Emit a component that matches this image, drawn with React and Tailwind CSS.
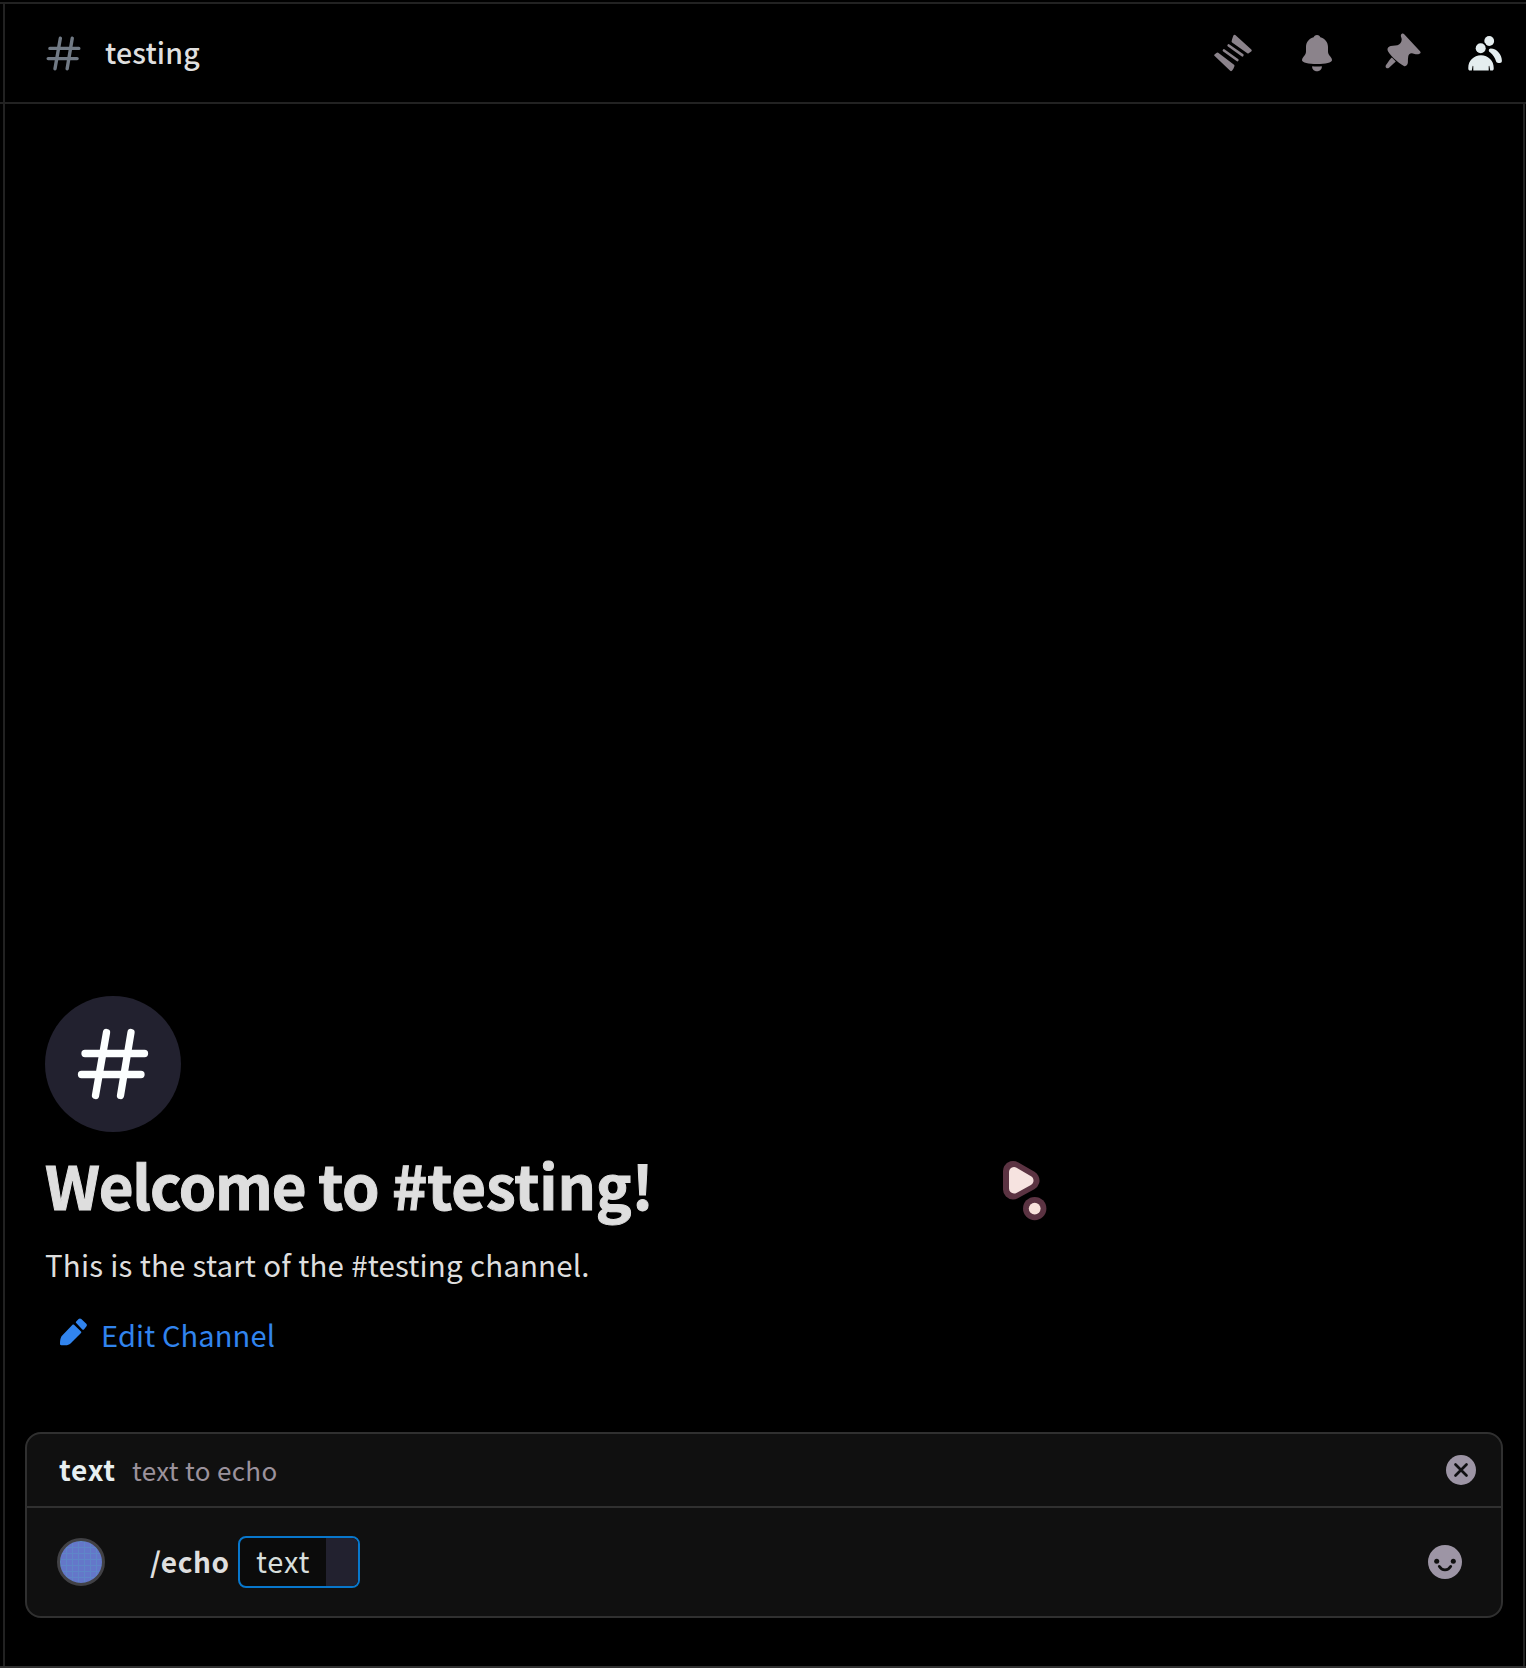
import React from "react";

function Hash({ className, strokeWidth }) {
  return (
    <svg viewBox="0 0 72 72" className={className} fill="none" stroke="currentColor" strokeWidth={strokeWidth} strokeLinecap="round">
      <path d="M29.5 4.5 18.5 67.5M54 4.5 43.5 67.5M8 25.5H67.500M4.500 46.500H64" />
    </svg>
  );
}

function ThreadsIcon() {
  return (
    <svg viewBox="0 0 38 38" className="h-[38px] w-[38px]" fill="currentColor" stroke="currentColor" strokeLinecap="round" strokeLinejoin="round">
      <path d="M20.500 2 19.300 5.300 18.800 7.500 34 18.300 36.500 16.500Z" strokeWidth="2.400" />
      <path d="M14.700 11.500 28.300 21.200M10 16.500 23.300 26" fill="none" strokeWidth="2.700" />
      <path d="M3.500 19.700 1.500 21.200 17 36 18.400 34 19.300 31.700Z" strokeWidth="2.400" />
    </svg>
  );
}

function BellIcon() {
  return (
    <svg viewBox="0 0 30 37" className="h-[37px] w-[30px]" fill="currentColor">
      <path d="M15 0c-1.900 0-3 1.200-3.300 2.300C7.300 3.500 4 7 4 12v4.500c0 2.200-1 3.500-2.500 5.200C.5 22.900 0 24 0 25.300 0 27.700 6.500 29 15 29s15-1.300 15-3.700c0-1.300-.5-2.400-1.500-3.600C27 20 26 18.700 26 16.500V12c0-5-3.300-8.500-7.700-9.700C18 1.200 16.900 0 15 0Z" />
      <path d="M10.200 31.200c3 .3 6.600.3 9.600 0 .4 2.700-1.800 5-4.800 5s-5.200-2.300-4.800-5Z" />
    </svg>
  );
}

function PinIcon() {
  return (
    <svg viewBox="0 0 36 37" className="h-[37px] w-[36px]" fill="currentColor">
      <path d="M17.200.6c-1 .4-1.500 1.400-1.300 2.700.2 1.200.9 2 .8 3.500-.2 2.600-2 5-4.300 5.400l-6.700.8c-1.600.2-3.600 1.900-3.200 4 .6 3.300 10.500 13.200 16.400 15.900 2 .9 3.900-1 4-3.600 0-1.700 0-3.700.3-5.500.3-2.200 1.400-3.300 3.500-3.500 1.500-.1 2.500.9 4 1 1.300.1 2.900.1 4.300-.8 1-.7.700-1.700-.2-2.600L19.200 1.200c-.7-.7-1.200-.9-2-.6Z" />
      <path d="M7.600 25.200 10.800 28.400 4 34.700c-1.900 1.600-4.400-.2-3-2.600 1-1.500 3.500-5.200 5-6.900.5-.6 1.100-.5 1.600 0Z" />
    </svg>
  );
}

function MembersIcon() {
  return (
    <svg viewBox="0 0 34 35" className="h-[35px] w-[34px]" fill="currentColor">
      <circle cx="21.200" cy="5" r="4.900" />
      <circle cx="12.700" cy="12.200" r="6.700" fill="#000" />
      <circle cx="12.700" cy="12.200" r="5" />
      <path d="M22.700 12.500c6.300 0 11.200 6.300 11.200 12.300 0 1.400-.8 2.200-2 2.200h-1.500c-1.200 0-2-.7-2.400-1.700-.9-3.200-2.900-6.600-6-9-.7-.6-1.200-1-1.200-1.900 0-1.200.9-1.900 1.900-1.900Z" />
      <path d="M.3 31.700C.3 24.900 5.700 19.300 13 19.300s12.700 5.600 12.700 12.400v1c0 1.200-.7 1.800-1.700 1.800H22.200l-.7-4.100c-.2-.8-.8-.7-.8 0v4.100H5.300v-4.100c0-.7-.6-.8-.8 0l-.7 4.100H2c-1 0-1.700-.6-1.700-1.800Z" />
    </svg>
  );
}

function PencilIcon() {
  return (
    <svg viewBox="0 0 27 28" className="h-7 w-[27px]" fill="currentColor">
      <path d="M16.200 3.600 18.600 1c.8-.8 1.900-.8 2.700 0l5 4.700c.8.800.8 1.900 0 2.700l-2.200 2.900c-.6.700-1.300.7-2 0l-5.900-6.200c-.5-.5-.5-1 0-1.500Z" />
      <path d="M14 6.800 21 13.400c.5.500.5 1.100 0 1.600L10.500 25.500C9.300 26.700 7.500 27.300 5.500 27.300H1.300C.5 27.300 0 26.900 0 26.100c0-3.400.3-5.700 1.500-7.800L12.500 6.800c.5-.5 1-.5 1.500 0Z" />
    </svg>
  );
}

function CloseIcon() {
  return (
    <svg viewBox="0 0 30 30" className="h-[30px] w-[30px]">
      <circle cx="15" cy="15" r="15" fill="#9d95a5" />
      <path d="m9.500 9.500 11 11m0-11-11 11" stroke="#101012" strokeWidth="2.700" strokeLinecap="round" />
    </svg>
  );
}

function SmileIcon() {
  return (
    <svg viewBox="0 0 34 34" className="h-[34px] w-[34px]">
      <circle cx="17" cy="17" r="17" fill="#9d95a5" />
      <circle cx="8.700" cy="16.300" r="2.500" fill="#101010" />
      <circle cx="25.300" cy="16.300" r="2.500" fill="#101010" />
      <path d="M11.200 21.300C14 26 20 26 22.800 21.300" fill="none" stroke="#101010" strokeWidth="2.700" strokeLinecap="round" />
    </svg>
  );
}

function Pointer() {
  return (
    <svg viewBox="0 0 46 62" className="absolute left-[1002px] top-[1160px] h-[62px] w-[46px]" strokeLinejoin="round">
      <path d="M11 11v18.500L27.500 20.500Z" fill="#5b3342" stroke="#5b3342" strokeWidth="20" />
      <circle cx="32.700" cy="48.600" r="11.700" fill="#5b3342" />
      <path d="M12 12v16.500L26.500 20.500Z" fill="#f6e3e0" stroke="#f6e3e0" strokeWidth="10" />
      <circle cx="32.700" cy="48.600" r="5.900" fill="#f9e3dc" />
    </svg>
  );
}

function Header() {
  return (
    <header className="ml-[3px] flex h-[98px] items-center border-l-2 border-[#222222] pl-[41px] pr-[24px]">
      <Hash className="h-[35px] w-[35px] text-[#717a85]" strokeWidth={7} />
      <h1 className="-mt-0.5 ml-6 text-[28.500px] font-medium leading-10 tracking-[0.15px] text-[#dfdfdf]">testing</h1>
      <nav className="ml-auto flex items-center text-[#8b838b]">
        <ThreadsIcon />
        <span className="ml-[50px]"><BellIcon /></span>
        <span className="-mt-1 ml-[53px]"><PinIcon /></span>
        <span className="ml-[47px] text-[#e4edef]"><MembersIcon /></span>
      </nav>
    </header>
  );
}

function Composer() {
  return (
    <section className="ml-[20px] mr-[20px] h-[186px] rounded-2xl border-2 border-[#303030] bg-[#101010]">
      <div className="flex h-[74px] items-center border-b-2 border-[#303030] pl-8 pr-[25px]">
        <b className="-mt-0.5 text-[28px] leading-10 tracking-[0.8px] text-[#e7eff1]">text</b>
        <span className="ml-4 text-[26px] leading-10 tracking-[0.32px] text-[#9b929c]">text to echo</span>
        <span className="ml-auto"><CloseIcon /></span>
      </div>
      <div className="flex h-[108px] items-center pl-[30px] pr-[39px]">
        <div className="h-12 w-12 rounded-full border-3 border-[#414145] bg-[#6477c9] bg-[linear-gradient(90deg,#5f86c8_1px,transparent_1px),linear-gradient(#5f86c8_1px,transparent_1px)] bg-size-[6px_6px]" />
        <b className="-mt-0.5 ml-[45px] w-[80px] text-[28px] leading-10 tracking-[0.6px] text-[#dfdfdf]">/echo</b>
        <div className="ml-2 flex h-[52px] w-[122px] overflow-hidden rounded-lg border-2 border-[#0877cc] bg-[#0b0b0b]">
          <span className="w-[86px] pl-4 text-[29px] leading-[45px] tracking-[0.8px] text-[#d8dfdc]">text</span>
          <span className="flex-1 bg-[#22212f]" />
        </div>
        <span className="ml-auto"><SmileIcon /></span>
      </div>
    </section>
  );
}

export default function App() {
  return (
    <div className="relative flex h-[1668px] w-[1526px] flex-col overflow-hidden whitespace-nowrap border-b-2 border-[#303030] bg-black pt-0.5 font-['Noto_Sans_CJK_JP','Noto_Sans',sans-serif]">
      <div className="h-0.5 shrink-0 bg-[#222222]" />
      <Header />
      <div className="h-0.5 shrink-0 bg-[#222222]" />
      <main className="ml-[3px] mr-px flex flex-1 flex-col justify-end border-x-2 border-[#222222] pb-[48px]">
        <div className="flex flex-col items-start pb-[76px] pl-10">
          <div className="flex h-[136px] w-[136px] items-center justify-center rounded-full bg-[#22212f]">
            <Hash className="h-[72px] w-[72px] text-[#fcffff]" strokeWidth={7.3} />
          </div>
          <h2 className="mt-4 text-[60px] font-bold leading-[72px] tracking-[-0.6px] text-[#dedede] [-webkit-text-stroke:1px_#dedede]">
            <span className="tracking-[-1.2px]">Welcome</span> to <span className="tracking-[-0.1px]">#testing!</span>
          </h2>
          <p className="mt-[22px] text-[29.500px] leading-[44px] tracking-[0.15px] text-[#dedede] [word-spacing:0.4px]">This is the start of the #testing channel.</p>
          <button className="mt-[26px] flex items-center pl-[15px] text-[29px] leading-[44px] tracking-[0.15px] text-[#3184ee]">
            <span className="-mt-[4px] mr-[14px]"><PencilIcon /></span>
            <span>Edit Channel</span>
          </button>
        </div>
        <Composer />
      </main>
      <Pointer />
    </div>
  );
}
